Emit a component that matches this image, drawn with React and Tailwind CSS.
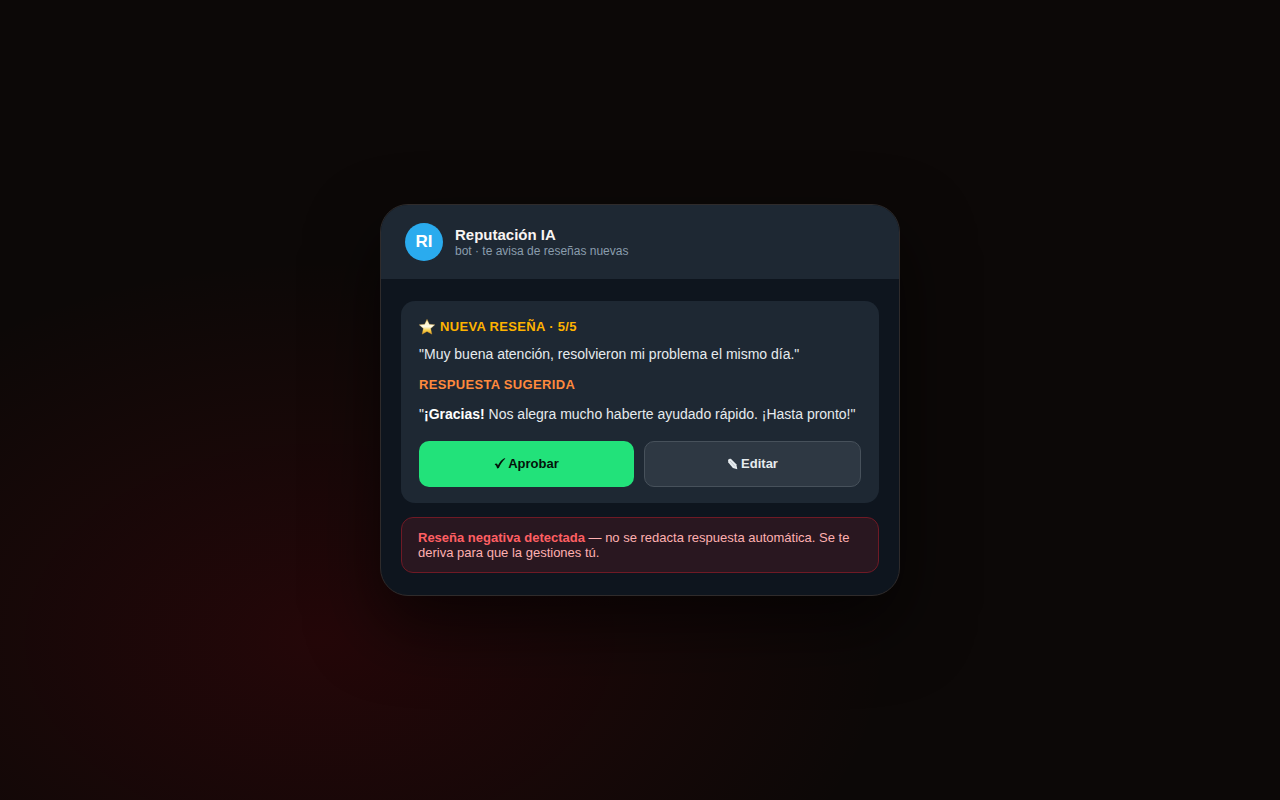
import { useId } from 'react'

function StarIcon() {
  const id = useId()

  return (
    <svg viewBox="0 0 16 16" className="h-4 w-4 shrink-0" aria-hidden="true">
      <defs>
        <linearGradient id={id} x1="0" y1="0" x2="0" y2="1">
          <stop offset="0" stopColor="#e6b95a" />
          <stop offset="0.2" stopColor="#fff3c4" />
          <stop offset="0.5" stopColor="#fffbe6" />
          <stop offset="0.75" stopColor="#f7cf4a" />
          <stop offset="1" stopColor="#e39a1c" />
        </linearGradient>
      </defs>
      <path
        d="M8 0.2 10.3 5.2 15.9 5.8 11.7 9.6 12.9 15.2 8 12.4 3.1 15.2 4.3 9.6 0.1 5.8 5.7 5.2Z"
        fill={`url(#${id})`}
        stroke="#d9a236"
        strokeWidth="0.3"
        strokeLinejoin="round"
      />
    </svg>
  )
}

function CheckIcon() {
  return (
    <svg viewBox="0 0 12 12" className="h-3 w-3 shrink-0" fill="currentColor" aria-hidden="true">
      <path d="M0.6 6.4C1.3 5.2 2.7 5 3.3 6.1L3.9 7.4C5.5 4.2 7.9 1.4 10.3 0.2L11.4 0.4C8.6 2.8 6.5 6 4.8 10L3.2 10.4C2.8 9 2.2 7.8 1.7 7.2 1.3 6.8 0.9 6.7 0.6 6.4Z" />
    </svg>
  )
}

function PencilIcon() {
  return (
    <svg viewBox="0 0 11 12" className="h-3 w-3 shrink-0" aria-hidden="true">
      <path
        d="M0.6 2.4C0.6 1 2.2 0.2 3.6 1L8.8 6.2 9.8 11.2 5.4 10 0.8 4.6Z"
        fill="currentColor"
      />
      <path d="M2.6 3 7.4 8.4" stroke="#9aa2aa" strokeWidth="0.5" fill="none" />
    </svg>
  )
}

export default function App() {
  return (
    <main className="flex min-h-screen items-center justify-center bg-[#0c0807] bg-[radial-gradient(ellipse_at_25%_80%,rgba(200,0,20,0.13),transparent_42%)] px-4 font-['Liberation_Sans',Arial,sans-serif]">
      <section className="w-full max-w-[520px] overflow-hidden rounded-[28px] border border-[#2f2b2b] bg-[#0e151e] shadow-[0_30px_70px_rgba(0,0,0,0.6)]">
        <header className="flex items-center gap-3 bg-[#1e2833] px-6 py-[18px]">
          <div className="flex h-[38px] w-[38px] items-center justify-center rounded-full bg-[#2aabee] text-[17px] font-bold text-white">
            RI
          </div>
          <div className="pt-0.5">
            <h1 className="text-[15px] leading-4 font-bold text-[#f8f4f2]">Reputación IA</h1>
            <p className="text-xs leading-4 text-[#8a9dad]">bot · te avisa de reseñas nuevas</p>
          </div>
        </header>

        <div className="flex flex-col gap-[14px] px-5 py-[22px]">
          <article className="rounded-[14px] bg-[#1e2833] px-[18px] py-4">
            <h2 className="flex items-center gap-[5px] text-[13px] leading-5 font-bold tracking-wide text-[#ffb300]">
              <StarIcon />
              NUEVA RESEÑA · 5/5
            </h2>
            <p className="mt-1.5 text-sm leading-[22px] text-[#e6ebee]">
              "Muy buena atención, resolvieron mi problema el mismo día."
            </p>
            <h2 className="mt-[10px] text-[13px] leading-5 font-bold tracking-wide text-[#ff8a3d]">
              RESPUESTA SUGERIDA
            </h2>
            <p className="mt-2 text-sm leading-[22px] text-[#e6ebee]">
              "<strong className="text-white">¡Gracias!</strong> Nos alegra mucho haberte ayudado rápido. ¡Hasta pronto!"
            </p>
            <div className="mt-4 flex gap-[10px]">
              <button
                type="button"
                className="flex h-[46px] flex-1 items-center justify-center gap-0.5 rounded-[10px] bg-[#22e27a] text-[13px] font-bold text-[#04120a]"
              >
                <CheckIcon />
                Aprobar
              </button>
              <button
                type="button"
                className="flex h-[46px] flex-1 items-center justify-center gap-0.5 rounded-[10px] border border-[#47515b] bg-[#2e3843] text-[13px] font-bold text-[#e6ebee]"
              >
                <PencilIcon />
                Editar
              </button>
            </div>
          </article>

          <p className="rounded-xl border border-[#6f1a25] bg-[#291720] px-4 py-3 text-[13px] leading-[15px] text-[#ffb0b0]">
            <strong className="text-[#ff5f63]">Reseña negativa detectada</strong> — no se redacta respuesta
            automática. Se te deriva para que la gestiones tú.
          </p>
        </div>
      </section>
    </main>
  )
}
